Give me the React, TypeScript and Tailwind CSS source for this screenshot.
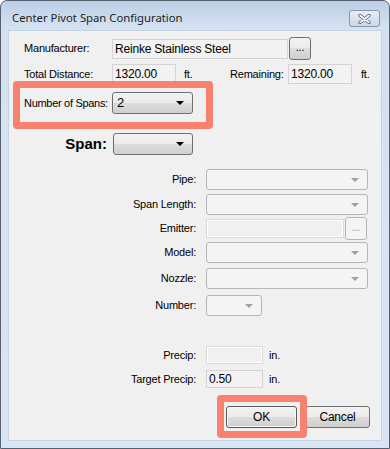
import React from "react";

const font = { fontFamily: '"Liberation Sans", Arial, sans-serif' };

function Arrow({ enabled }: { enabled: boolean }) {
  return (
    <svg width="8" height="4" viewBox="0 0 8 4" className="shrink-0">
      <path d="M0 0 L8 0 L4 4 Z" fill={enabled ? "#000" : "#a0a0a0"} />
    </svg>
  );
}

function Combo({ width, value, enabled = false }: { width: string; value?: string; enabled?: boolean }) {
  return (
    <div
      className={
        enabled
          ? `${width} h-[22px] flex items-center justify-between pl-[4px] pr-[8px] rounded-[3px] border border-[#707070] bg-[linear-gradient(#f2f2f2_0%,#ebebeb_50%,#dddddd_50%,#cfcfcf_100%)]`
          : `${width} h-[21px] flex items-center justify-end pr-[8px] rounded-[3px] border border-[#b5b5b5] bg-[#f4f4f4]`
      }
    >
      {enabled && <span className="text-[13px] text-black">{value}</span>}
      <Arrow enabled={enabled} />
    </div>
  );
}

function TextBox({ width, value, h = "h-[20px]", disabled = false }: { width: string; value?: string; h?: string; disabled?: boolean }) {
  return (
    <div
      className={`${width} ${h} flex items-center px-[2px] whitespace-nowrap border ${
        disabled ? "border-[#dadada] bg-[#f0f0f0] shadow-[inset_0_0_0_1px_#ffffff]" : "border-[#d4d4d4] bg-[#f2f2f2]"
      } text-[12px] tracking-[-0.2px] text-black`}
    >
      {value}
    </div>
  );
}

function DotsButton({ disabled = false }: { disabled?: boolean }) {
  return (
    <div
      className={`w-[22px] h-[23px] flex items-center justify-center rounded-[3px] border text-[11px] leading-none pb-[2px] ${
        disabled
          ? "border-[#b5b5b5] bg-[#f4f4f4] text-[#9a9a9a]"
          : "border-[#707070] bg-[linear-gradient(#f2f2f2_0%,#ebebeb_50%,#dddddd_50%,#cfcfcf_100%)] text-black"
      }`}
    >
      ...
    </div>
  );
}

function RightRow({ label, children, mt }: { label: string; children: React.ReactNode; mt: string }) {
  return (
    <div className={`flex items-center ${mt}`}>
      <span className="w-[172px] text-right whitespace-nowrap">{label}</span>
      <div className="ml-[10px] flex items-center">{children}</div>
    </div>
  );
}

function Button({ label, width, isDefault = false }: { label: string; width: string; isDefault?: boolean }) {
  return (
    <div
      className={`${width} h-[22px] flex items-center justify-center rounded-[3px] border ${
        isDefault ? "border-[#5a5a5a] shadow-[inset_0_0_0_1px_#f8f8f8]" : "border-[#707070]"
      } bg-[linear-gradient(#f2f2f2_0%,#ebebeb_50%,#dddddd_50%,#cfcfcf_100%)] text-[12px] text-black`}
    >
      {label}
    </div>
  );
}

export default function App() {
  return (
    <div className="w-[390px] h-[449px] bg-white" style={font}>
      <div className="w-[390px] h-[449px] flex flex-col rounded-t-[7px] border border-[#56606e] bg-[linear-gradient(#bccfe6_0px,#d3e1f1_26px,#d8e5f3_100%)]">
        {/* title bar */}
        <div className="h-[29px] flex items-start justify-between pl-[11px] pr-[9px] shrink-0">
          <span
            className="mt-[10px] text-[11.3px] leading-[14px] text-[#1f1f1f]"
            style={{ fontFamily: '"Noto Sans", "Open Sans", sans-serif' }}
          >
            Center Pivot Span Configuration
          </span>
          <div className="mt-[9px] w-[31px] h-[17px] flex items-center justify-center rounded-[3px] border border-[#8796ab] bg-[linear-gradient(#e6edf6,#cbd8e9)]">
            <svg width="13" height="10" viewBox="0 0 13 10">
              <path d="M2 1.5 L11 8.5 M11 1.5 L2 8.5" stroke="#5a6473" strokeWidth="3.4" strokeLinecap="round" />
              <path d="M2 1.5 L11 8.5 M11 1.5 L2 8.5" stroke="#ffffff" strokeWidth="1.6" strokeLinecap="round" />
            </svg>
          </div>
        </div>

        {/* client area */}
        <div className="relative flex-1 mx-[7px] mb-[7px] bg-[#f0f0f0] border border-[#c6d3e2] pl-[15px] pt-[6px] text-[11px] tracking-[-0.2px] text-black">
          {/* Manufacturer */}
          <div className="flex items-center h-[23px]">
            <span className="w-[88px] whitespace-nowrap">Manufacturer:</span>
            <TextBox width="w-[176px]" value="Reinke Stainless Steel" />
            <div className="ml-[1px]">
              <DotsButton />
            </div>
          </div>

          {/* Total Distance */}
          <div className="flex items-center h-[20px] mt-[4px]">
            <span className="w-[88px] whitespace-nowrap">Total Distance:</span>
            <TextBox width="w-[64px]" value="1320.00" />
            <span className="ml-[8px] w-[46px]">ft.</span>
            <span className="w-[58px] whitespace-nowrap">Remaining:</span>
            <TextBox width="w-[64px]" value="1320.00" />
            <span className="ml-[9px]">ft.</span>
          </div>

          {/* Number of Spans */}
          <div className="flex items-center h-[22px] mt-[8px]">
            <span className="w-[88px] whitespace-nowrap tracking-[-0.3px]">Number of Spans:</span>
            <Combo width="w-[81px]" value="2" enabled />
          </div>

          {/* Span */}
          <div className="flex items-center h-[22px] mt-[19px]">
            <span className="w-[83px] text-right text-[15px] font-bold tracking-normal">Span:</span>
            <div className="ml-[6px]">
              <Combo width="w-[80px]" enabled />
            </div>
          </div>

          <RightRow label="Pipe:" mt="mt-[14px]">
            <Combo width="w-[162px]" />
          </RightRow>
          <RightRow label="Span Length:" mt="mt-[4px]">
            <Combo width="w-[162px]" />
          </RightRow>
          <RightRow label="Emitter:" mt="mt-[2px]">
            <TextBox width="w-[138px]" h="h-[19px]" disabled />
            <div className="ml-[1px]">
              <DotsButton disabled />
            </div>
          </RightRow>
          <RightRow label="Model:" mt="mt-[2px]">
            <Combo width="w-[162px]" />
          </RightRow>
          <RightRow label="Nozzle:" mt="mt-[5px]">
            <Combo width="w-[162px]" />
          </RightRow>
          <RightRow label="Number:" mt="mt-[6px]">
            <Combo width="w-[56px]" />
          </RightRow>

          <RightRow label="Precip:" mt="mt-[30px]">
            <TextBox width="w-[57px]" h="h-[18px]" disabled />
            <span className="ml-[6px]">in.</span>
          </RightRow>
          <RightRow label="Target Precip:" mt="mt-[6px]">
            <TextBox width="w-[57px]" h="h-[18px]" value="0.50" />
            <span className="ml-[6px]">in.</span>
          </RightRow>

          {/* buttons */}
          <div className="flex justify-end gap-[8px] mt-[18px] pr-[11px]">
            <Button label="OK" width="w-[71px]" isDefault />
            <Button label="Cancel" width="w-[65px]" />
          </div>

          {/* annotation highlights */}
          <div className="absolute left-[4px] top-[50px] w-[200px] h-[48px] rounded-[4px] border-[7px] border-[#f8826f]" />
          <div className="absolute left-[208px] top-[364px] w-[90px] h-[43px] rounded-[4px] border-[7px] border-[#f8826f]" />
        </div>
      </div>
    </div>
  );
}
